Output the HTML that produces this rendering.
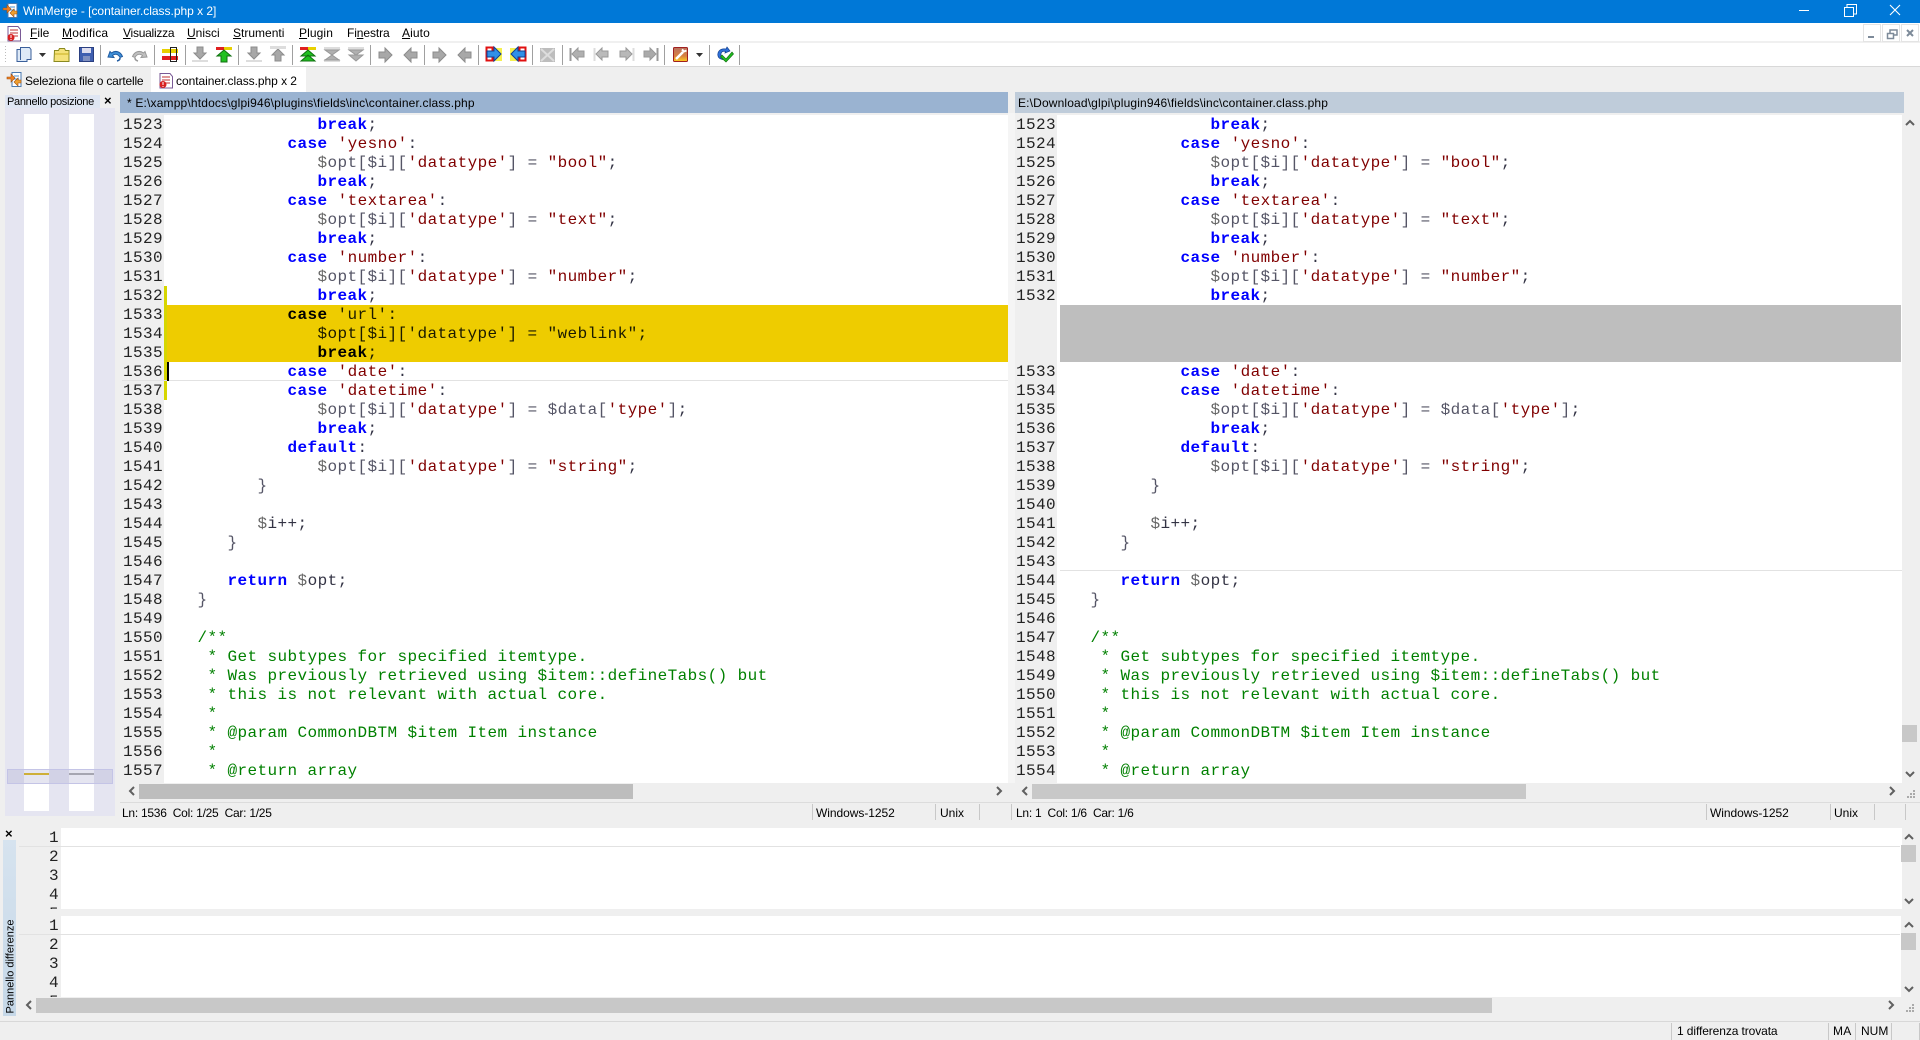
<!DOCTYPE html>
<html><head><meta charset="utf-8"><title>WinMerge</title>
<style>
html,body{margin:0;padding:0;width:1920px;height:1040px;overflow:hidden;background:#f0f0f0}
body{position:relative;font-family:"Liberation Sans",sans-serif}
.b{position:absolute}
.t{position:absolute;font:12px/16px "Liberation Sans",sans-serif;color:#000;white-space:pre}
pre{position:absolute;margin:0;font:16px/19px "Liberation Mono",monospace;letter-spacing:.4px;color:#334;white-space:pre}
.n{color:#222;text-align:right}
.k{color:#00f;font-weight:bold}
.s{color:#800000}
.d{color:#666}
.p{color:#556}
.c{color:#008000}
.h,.h *{color:#1a1a00}
.h .k{color:#000;font-weight:bold}
svg{position:absolute;left:0;top:0;overflow:visible}
</style></head><body>
<!-- title bar -->
<div class="b" style="left:0;top:0;width:1920px;height:23px;background:#0078d7"></div>
<div class="t" style="left:23px;top:3px;color:#fff;letter-spacing:-.02px">WinMerge - [container.class.php x 2]</div>
<div class="b" style="left:0;top:23px;width:1920px;height:18px;background:#fff"></div>
<div class="b" style="left:0;top:41px;width:1920px;height:2px;background:#f0f0f0"></div>
<div class="b" style="left:0;top:43px;width:1920px;height:23px;background:#fff"></div>
<div class="b" style="left:0;top:66px;width:1920px;height:1px;background:#d8d8d8"></div>
<div class="b" style="left:0;top:67px;width:1920px;height:973px;background:#efefef"></div>
<!-- menu -->
<div class="t" style="left:30px;top:25px"><u>F</u>ile</div>
<div class="t" style="left:62px;top:25px;letter-spacing:.2px"><u>M</u>odifica</div>
<div class="t" style="left:123px;top:25px;letter-spacing:-.25px"><u>V</u>isualizza</div>
<div class="t" style="left:187px;top:25px"><u>U</u>nisci</div>
<div class="t" style="left:233px;top:25px"><u>S</u>trumenti</div>
<div class="t" style="left:299px;top:25px;letter-spacing:.1px"><u>P</u>lugin</div>
<div class="t" style="left:347px;top:25px;letter-spacing:-.1px">Fi<u>n</u>estra</div>
<div class="t" style="left:402px;top:25px;letter-spacing:.1px"><u>A</u>iuto</div>
<!-- tabs -->
<div class="b" style="left:151px;top:67px;width:155px;height:25px;background:#fff"></div>
<div class="t" style="left:25px;top:73px;letter-spacing:-.2px">Seleziona file o cartelle</div>
<div class="t" style="left:176px;top:73px;letter-spacing:-.05px">container.class.php x 2</div>
<!-- location pane -->
<div class="b" style="left:5px;top:95px;width:95px;height:13px;background:#dfe6f3"></div>
<div class="t" style="left:7px;top:94px;font-size:11px;letter-spacing:-.3px">Pannello posizione</div>
<div class="t" style="left:104px;top:93px;font-weight:bold;font-size:13px">×</div>
<div class="b" style="left:5px;top:108px;width:110px;height:708px;background:#e5e5f1"></div>
<div class="b" style="left:24px;top:114px;width:25px;height:697px;background:#fff"></div>
<div class="b" style="left:69px;top:114px;width:25px;height:697px;background:#fff"></div>
<div class="b" style="left:24px;top:773px;width:25px;height:2px;background:#dfb400"></div>
<div class="b" style="left:69px;top:773px;width:25px;height:2px;background:#a8a8a8"></div>
<div class="b" style="left:7px;top:769px;width:106px;height:15px;background:rgba(160,160,200,.28);box-sizing:border-box;border:1px solid #c4c4e6"></div>
<!-- headers -->
<div class="b" style="left:120px;top:92px;width:888px;height:21px;background:#9ab3d1"></div>
<div class="b" style="left:1015px;top:92px;width:889px;height:21px;background:#bfccda"></div>
<div class="t" style="left:127px;top:95px;letter-spacing:.17px">* E:\xampp\htdocs\glpi946\plugins\fields\inc\container.class.php</div>
<div class="t" style="left:1018px;top:95px;letter-spacing:.15px">E:\Download\glpi\plugin946\fields\inc\container.class.php</div>
<!-- left pane -->
<div class="b" style="left:122px;top:115px;width:886px;height:668px;background:#fff"></div>
<div class="b" style="left:122px;top:115px;width:42px;height:668px;background:#efefef"></div>
<div class="b" style="left:164px;top:286px;width:3px;height:114px;background:#d6d600"></div>
<div class="b" style="left:167px;top:305px;width:841px;height:57px;background:#eecc00"></div>
<div class="b" style="left:122px;top:380px;width:886px;height:1px;background:#e2e2e2"></div>
<div class="b" style="left:167px;top:362px;width:2px;height:19px;background:#000"></div>
<!-- right pane -->
<div class="b" style="left:1008px;top:113px;width:7px;height:670px;background:#f5f5f5"></div>
<div class="b" style="left:1015px;top:115px;width:887px;height:668px;background:#fff"></div>
<div class="b" style="left:1015px;top:115px;width:42px;height:668px;background:#efefef"></div>
<div class="b" style="left:1060px;top:305px;width:841px;height:57px;background:#bebebe"></div>
<div class="b" style="left:1060px;top:570px;width:842px;height:1px;background:#e2e2e2"></div>
<pre class="n" style="left:123px;top:116px;height:666px;overflow:hidden">1523
1524
1525
1526
1527
1528
1529
1530
1531
1532
1533
1534
1535
1536
1537
1538
1539
1540
1541
1542
1543
1544
1545
1546
1547
1548
1549
1550
1551
1552
1553
1554
1555
1556
1557</pre>
<pre class="n" style="left:1016px;top:116px;height:666px;overflow:hidden">1523
1524
1525
1526
1527
1528
1529
1530
1531
1532



1533
1534
1535
1536
1537
1538
1539
1540
1541
1542
1543
1544
1545
1546
1547
1548
1549
1550
1551
1552
1553
1554</pre>
<pre style="left:167.5px;top:116px">               <span class="k">break</span>;
            <span class="k">case</span> <span class="s">'yesno'</span>:
               <span class="d">$</span><span class="p">opt[$i][</span><span class="s">'datatype'</span><span class="p">] = </span><span class="s">"bool"</span>;
               <span class="k">break</span>;
            <span class="k">case</span> <span class="s">'textarea'</span>:
               <span class="d">$</span><span class="p">opt[$i][</span><span class="s">'datatype'</span><span class="p">] = </span><span class="s">"text"</span>;
               <span class="k">break</span>;
            <span class="k">case</span> <span class="s">'number'</span>:
               <span class="d">$</span><span class="p">opt[$i][</span><span class="s">'datatype'</span><span class="p">] = </span><span class="s">"number"</span>;
               <span class="k">break</span>;
<span class="h">            <span class="k">case</span> 'url':
               $opt[$i]['datatype'] = "weblink";
               <span class="k">break</span>;</span>
            <span class="k">case</span> <span class="s">'date'</span>:
            <span class="k">case</span> <span class="s">'datetime'</span>:
               <span class="d">$</span><span class="p">opt[$i][</span><span class="s">'datatype'</span><span class="p">] = $data[</span><span class="s">'type'</span><span class="p">]</span>;
               <span class="k">break</span>;
            <span class="k">default</span>:
               <span class="d">$</span><span class="p">opt[$i][</span><span class="s">'datatype'</span><span class="p">] = </span><span class="s">"string"</span>;
         <span class="p">}</span>

         <span class="d">$</span>i++;
      <span class="p">}</span>

      <span class="k">return</span> <span class="d">$</span>opt;
   <span class="p">}</span>

   <span class="c">/**
    * Get subtypes for specified itemtype.
    * Was previously retrieved using $item::defineTabs() but
    * this is not relevant with actual core.
    *
    * @param CommonDBTM $item Item instance
    *
    * @return array</span></pre>
<pre style="left:1060.5px;top:116px">               <span class="k">break</span>;
            <span class="k">case</span> <span class="s">'yesno'</span>:
               <span class="d">$</span><span class="p">opt[$i][</span><span class="s">'datatype'</span><span class="p">] = </span><span class="s">"bool"</span>;
               <span class="k">break</span>;
            <span class="k">case</span> <span class="s">'textarea'</span>:
               <span class="d">$</span><span class="p">opt[$i][</span><span class="s">'datatype'</span><span class="p">] = </span><span class="s">"text"</span>;
               <span class="k">break</span>;
            <span class="k">case</span> <span class="s">'number'</span>:
               <span class="d">$</span><span class="p">opt[$i][</span><span class="s">'datatype'</span><span class="p">] = </span><span class="s">"number"</span>;
               <span class="k">break</span>;



            <span class="k">case</span> <span class="s">'date'</span>:
            <span class="k">case</span> <span class="s">'datetime'</span>:
               <span class="d">$</span><span class="p">opt[$i][</span><span class="s">'datatype'</span><span class="p">] = $data[</span><span class="s">'type'</span><span class="p">]</span>;
               <span class="k">break</span>;
            <span class="k">default</span>:
               <span class="d">$</span><span class="p">opt[$i][</span><span class="s">'datatype'</span><span class="p">] = </span><span class="s">"string"</span>;
         <span class="p">}</span>

         <span class="d">$</span>i++;
      <span class="p">}</span>

      <span class="k">return</span> <span class="d">$</span>opt;
   <span class="p">}</span>

   <span class="c">/**
    * Get subtypes for specified itemtype.
    * Was previously retrieved using $item::defineTabs() but
    * this is not relevant with actual core.
    *
    * @param CommonDBTM $item Item instance
    *
    * @return array</span></pre>
<!-- scrollbars main -->
<div class="b" style="left:139px;top:784px;width:494px;height:15px;background:#bdbdbd"></div>
<div class="b" style="left:1032px;top:784px;width:494px;height:15px;background:#c8c8c8"></div>
<div class="b" style="left:1902px;top:725px;width:15px;height:17px;background:#c8c8c8"></div>
<div class="b" style="left:120px;top:802px;width:1800px;height:1px;background:#dcdcdc"></div>
<!-- status rows -->
<div class="t" style="left:122px;top:805px;letter-spacing:-.26px">Ln: 1536  Col: 1/25  Car: 1/25</div>
<div class="t" style="left:1016px;top:805px;letter-spacing:-.26px">Ln: 1  Col: 1/6  Car: 1/6</div>
<div class="t" style="left:816px;top:805px;letter-spacing:-.05px">Windows-1252</div>
<div class="t" style="left:940px;top:805px">Unix</div>
<div class="t" style="left:1710px;top:805px;letter-spacing:-.05px">Windows-1252</div>
<div class="t" style="left:1834px;top:805px">Unix</div>
<!-- diff panes -->
<div class="b" style="left:19px;top:828px;width:1883px;height:81px;background:#fff"></div>
<div class="b" style="left:19px;top:828px;width:42px;height:81px;background:#efefef"></div>
<div class="b" style="left:19px;top:846px;width:1881px;height:1px;background:#e2e2e2"></div>
<div class="b" style="left:19px;top:916px;width:1882px;height:81px;background:#fff"></div>
<div class="b" style="left:19px;top:916px;width:42px;height:81px;background:#efefef"></div>
<div class="b" style="left:19px;top:934px;width:1881px;height:1px;background:#e2e2e2"></div>
<pre class="n" style="left:20px;top:829px;width:39px;height:80px;overflow:hidden">1
2
3
4
5</pre>
<pre class="n" style="left:20px;top:917px;width:39px;height:80px;overflow:hidden">1
2
3
4
5</pre>
<div class="b" style="left:1901px;top:845px;width:15px;height:17px;background:#c8c8c8"></div>
<div class="b" style="left:1901px;top:933px;width:15px;height:17px;background:#c8c8c8"></div>
<div class="b" style="left:36px;top:998px;width:1456px;height:15px;background:#c8c8c8"></div>
<div class="b" style="left:3px;top:840px;width:13px;height:176px;background:linear-gradient(#d6e3ef,#c6d8e8)"></div>
<div class="t" style="left:9px;top:826px;font-weight:bold;font-size:13px;margin-left:-4px">×</div>
<div class="t" style="left:-37.500px;top:958px;width:95px;font-size:11px;transform:rotate(-90deg);transform-origin:center;text-align:left">Pannello differenze</div>
<!-- bottom status -->
<div class="b" style="left:0;top:1021px;width:1920px;height:1px;background:#d8d8d8"></div>
<div class="t" style="left:1677px;top:1023px;letter-spacing:-.1px">1 differenza trovata</div>
<div class="t" style="left:1833px;top:1023px;letter-spacing:.3px">MA</div>
<div class="t" style="left:1861px;top:1023px">NUM</div>
<svg width="1920" height="1040" viewBox="0 0 1920 1040">
<defs>
<g id="gd"><path d="M5 1h6v6h3l-6 6-6-6h3z" fill="#a8a8a8" stroke="#8c8c8c"/><path d="M0 14h16v2H0z" fill="#ddd"/></g>
<g id="gu"><path d="M5 15h6V9h3L8 3 2 9h3z" fill="#a8a8a8" stroke="#8c8c8c"/><path d="M0 0h16v3H0z" fill="#ddd"/></g>
<g id="gr"><path d="M1 5h6V1l7 7-7 7v-4H1z" fill="#a8a8a8" stroke="#8c8c8c"/></g>
<g id="gl"><path d="M15 5H9V1L2 8l7 7v-4h6z" fill="#a8a8a8" stroke="#8c8c8c"/></g>
<g id="doc"><path d="M1 .5h10l2.500 3v11.500H1z" fill="#fff" stroke="#7a5a96"/><path d="M3 4h8M3 7h8M3 10h8" stroke="#c03030"/><circle cx="4" cy="11.500" r="3.500" fill="#d82020"/><path d="M4 9v3M4 13v1" stroke="#fff"/></g>
<g id="wm"><path d="M5 .5h9v14H5z" fill="#fff" stroke="#4a7ab0"/><path d="M7 4h5M7 7h5M7 10h5" stroke="#4a90d0"/><path d="M0 5h4V2l4 4-4 4V7H0z" fill="#f08020" stroke="#a05010" stroke-width=".6"/><path d="M14 8h-3V6l-4 4 4 4v-3h3z" fill="#f0a030" stroke="#a05010" stroke-width=".6"/></g>
</defs>
<!-- title icon, menu icon, tab icons -->
<use href="#wm" x="3" y="3"/>
<use href="#doc" x="7" y="26"/>
<use href="#wm" x="7" y="72"/>
<use href="#doc" x="159" y="73"/>
<!-- window buttons -->
<path d="M1799 10.500h10" stroke="#fff"/>
<path d="M1844.500 7.500h9v9h-9zM1847 7V4.500h9.500V14H1854" fill="none" stroke="#fff"/>
<path d="M1890 5l10 10M1900 5l-10 10" stroke="#fff" stroke-width="1.100"/>
<!-- MDI buttons -->
<g fill="#fff" stroke="#e4e4e4"><rect x="1863.500" y="24.500" width="17" height="17"/><rect x="1882.500" y="24.500" width="17" height="17"/><rect x="1901.500" y="24.500" width="17" height="17"/></g>
<path d="M1868 36h6v2h-6z" fill="#7d8a99"/>
<path d="M1887.500 33.500h6v5h-6zM1890 33v-3h7v5h-3" fill="none" stroke="#7d8a99" stroke-width="1.500"/>
<path d="M1907 30l6 6M1913 30l-6 6" stroke="#7d8a99" stroke-width="2"/>
<!-- toolbar gripper -->
<g fill="#bdbdbd"><rect x="5" y="46" width="1" height="1"/><rect x="5" y="49" width="1" height="1"/><rect x="5" y="52" width="1" height="1"/><rect x="5" y="55" width="1" height="1"/><rect x="5" y="58" width="1" height="1"/><rect x="5" y="61" width="1" height="1"/></g>
<!-- separators -->
<path d="M100.500 45v20M154.500 45v20M238.500 45v20M292.500 45v20M370.500 45v20M532.500 45v20M562.500 45v20M664.500 45v20M709.500 45v20M739.500 45v20M424.500 45v20" stroke="#a0a0a0" fill="none"/>
<path d="M185.500 45v20M478.500 45v20" stroke="#a0a0a0"/>
<!-- new -->
<path d="M20.500 47.500h9l1.500 2v10h-4v2h-10v-12h3.500z" fill="#dde9f7" stroke="#3a5f9a"/><path d="M20.500 49v11" stroke="#3a5f9a"/>
<path d="M39 53h7l-3.500 4z" fill="#333"/>
<!-- open -->
<path d="M54.500 50.500h4l1-2h5l1 2h3.500v11h-15z" fill="#f4e27a" stroke="#8a8a20"/><path d="M55 54h14" stroke="#c8b020"/>
<!-- save -->
<rect x="79.500" y="47.500" width="14" height="14" fill="#3f5fb0" stroke="#2a3f80"/><rect x="82" y="48" width="9" height="5" fill="#dde"/><rect x="83" y="56" width="7" height="5" fill="#8090c0"/>
<!-- undo/redo -->
<path d="M110 51.500l-2 5.500 6 .5-1.500-2c3-2.500 6-1 7.500 2l2.500-1c-2-5-7-6.500-11-3.500z" fill="#3f90d8" stroke="#1f5aa0"/><path d="M120 58c0 1.500-1 2.500-3 3" stroke="#1f5aa0" stroke-width="1.500" fill="none"/>
<path d="M145 51.500l2 5.500-6 .5 1.500-2c-3-2.500-6-1-7.500 2l-2.500-1c2-5 7-6.500 11-3.500z" fill="#c0c0c0" stroke="#999"/><path d="M135 58c0 1.500 1 2.500 3 3" stroke="#999" stroke-width="1.500" fill="none"/>
<!-- options -->
<rect x="162" y="49" width="16" height="4" fill="#e8d000"/><rect x="162" y="56" width="16" height="4" fill="#e02020"/><rect x="170.500" y="47.500" width="6" height="14" fill="none" stroke="#222"/>
<use href="#gd" x="192" y="46"/>
<!-- prev green -->
<rect x="216" y="47" width="8" height="3" fill="#e02020"/><rect x="224" y="47" width="8" height="3" fill="#e8d000"/>
<path d="M221 62v-6h-4l7-6 7 6h-4v6z" fill="#20c020" stroke="#107010"/>
<use href="#gd" x="246" y="46"/>
<use href="#gu" x="270" y="46"/>
<!-- first green -->
<rect x="300" y="47" width="8" height="3" fill="#e02020"/><rect x="308" y="47" width="8" height="3" fill="#e8d000"/>
<path d="M308 50l7 6h-14zM308 55l7 6h-14z" fill="#20c020" stroke="#107010"/>
<path d="M324 47h16v3h-16zM324 59h16v3h-16z" fill="#ddd"/><path d="M325 50h14l-7 5zM325 60l7-5 7 5z" fill="#b0b0b0" stroke="#999"/>
<path d="M348 47h16v3h-16z" fill="#ddd"/><path d="M349 50h14l-7 5zM349 55h14l-7 6z" fill="#b0b0b0" stroke="#999"/>
<use href="#gr" x="378" y="47"/>
<use href="#gl" x="402" y="47"/>
<use href="#gr" x="432" y="47"/>
<use href="#gl" x="456" y="47"/>
<!-- blue copy -->
<rect x="486.500" y="47.500" width="6" height="13" fill="#fff" stroke="#e01010" stroke-width="2"/><rect x="495" y="48" width="7" height="13" fill="#f5f050"/>
<path d="M487 51h7v-4l7 7-7 7v-4h-7z" fill="#2f90e8" stroke="#103f90"/>
<rect x="510" y="48" width="7" height="13" fill="#f5f050"/><rect x="519.500" y="47.500" width="6" height="13" fill="#fff" stroke="#e01010" stroke-width="2"/>
<path d="M525 51h-7v-4l-7 7 7 7v-4h7z" fill="#2f90e8" stroke="#103f90"/>
<path d="M540 48h15v14h-15z" fill="#bdbdbd"/><path d="M541 49l13 12M554 49l-13 12" stroke="#ddd" stroke-width="2"/>
<path d="M570.500 48v13" stroke="#999" stroke-width="2"/><path d="M584 51h-6v-3l-6 6 6 6v-3h6z" fill="#b0b0b0" stroke="#999"/>
<path d="M594.500 48v13" stroke="#ddd" stroke-width="2"/><path d="M608 51h-6v-3l-6 6 6 6v-3h6z" fill="#bbb" stroke="#999"/>
<path d="M620 51h6v-3l6 6-6 6v-3h-6z" fill="#b8b8b8" stroke="#999"/><path d="M633.500 48v13" stroke="#ddd" stroke-width="2"/>
<path d="M644 51h6v-3l6 6-6 6v-3h-6z" fill="#aaa" stroke="#999"/><path d="M657.500 48v13" stroke="#999" stroke-width="2"/>
<!-- wrench -->
<defs><linearGradient id="wr" x1="0" y1="0" x2="0" y2="1"><stop offset="0" stop-color="#b87060"/><stop offset=".6" stop-color="#d88040"/><stop offset="1" stop-color="#ffd020"/></linearGradient></defs>
<rect x="673.500" y="47.500" width="14" height="14" rx="1" fill="url(#wr)" stroke="#a02020"/>
<path d="M676 59l7-7" stroke="#fff" stroke-width="2.500"/><path d="M682 49.500l2 2 2.500-1" stroke="#fff" stroke-width="2" fill="none"/>
<path d="M696 53h7l-3.500 4z" fill="#333"/>
<!-- refresh -->
<path d="M718 56c-1-5 3-8 8-7l1-2 3 4-5 2 .5-1.500c-3-1-5 1-4.500 4l1.500 4c-2-.5-4-1.500-4.500-3.500z" fill="#2f70d8" stroke="#103f90" stroke-width=".7"/>
<path d="M722 55l4 4 6-7 1.500 2-7.500 8-5.500-5z" fill="#20c020" stroke="#107010" stroke-width=".7"/>
<!-- scroll arrows -->
<g fill="none" stroke="#606060" stroke-width="2">
<path d="M134 787l-4 4 4 4M997 787l4 4-4 4M1027 787l-4 4 4 4M1890 787l4 4-4 4"/>
<path d="M1906 125l4-4 4 4M1906 772l4 4 4-4"/>
<path d="M1905 839l4-4 4 4M1905 899l4 4 4-4M1905 927l4-4 4 4M1905 987l4 4 4-4"/>
<path d="M31 1001l-4 4 4 4M1889 1001l4 4-4 4"/>
</g>
<!-- grips -->
<g fill="#aaa"><rect x="1913" y="790" width="2" height="2"/><rect x="1910" y="793" width="2" height="2"/><rect x="1913" y="793" width="2" height="2"/><rect x="1907" y="796" width="2" height="2"/><rect x="1910" y="796" width="2" height="2"/><rect x="1913" y="796" width="2" height="2"/>
<rect x="1912" y="1004" width="2" height="2"/><rect x="1909" y="1007" width="2" height="2"/><rect x="1912" y="1007" width="2" height="2"/><rect x="1906" y="1010" width="2" height="2"/><rect x="1909" y="1010" width="2" height="2"/><rect x="1912" y="1010" width="2" height="2"/></g>
<!-- status separators -->
<path d="M812.500 804v16M935.500 804v16M979.500 804v16M1011.500 804v16M1706.500 804v16M1830.500 804v16M1874.500 804v16M1905.500 804v16M1671.500 1023v17M1828.500 1023v17M1855.500 1023v17M1891.500 1023v17M1919.500 1023v17" stroke="#c8c8c8"/>
</svg>
</body></html>
